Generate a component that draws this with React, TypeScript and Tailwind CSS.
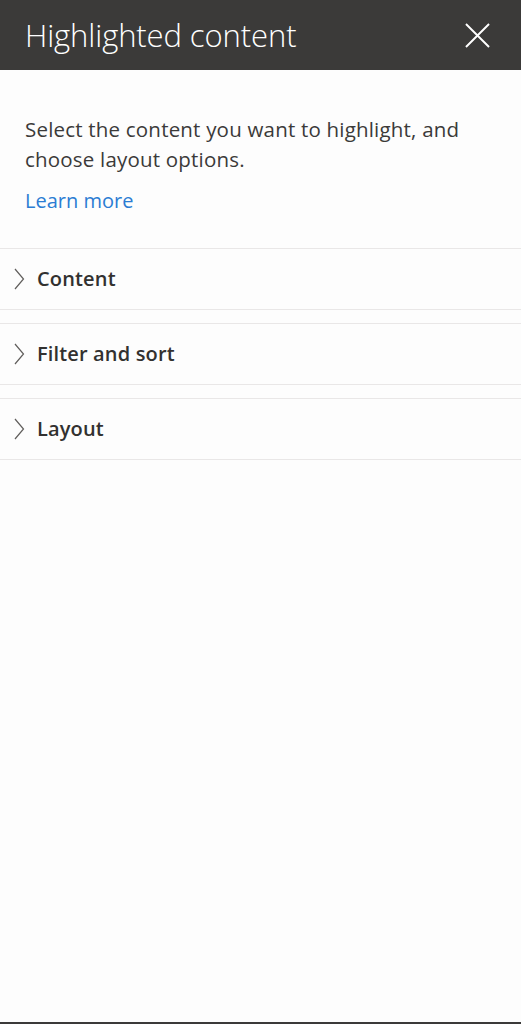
const sections = ["Content", "Filter and sort", "Layout"];

function Chevron() {
  return (
    <svg width="12" height="22" viewBox="0 0 12 22" fill="none" className="shrink-0">
      <path d="M2 1 L10.5 11 L2 21" stroke="#605e5c" strokeWidth="1.2" />
    </svg>
  );
}

export default function App() {
  return (
    <div className="w-[521px] h-[1024px] bg-[#fdfdfd] flex flex-col font-['Open_Sans','Noto_Sans',sans-serif] text-[#323130] border-b-2 border-[#3b3a39]">
      <div className="h-[70px] bg-[#3b3a39] flex items-center justify-between pl-[25px] pr-[31px] shrink-0">
        <h1 className="text-[31px] font-light text-white tracking-[-0.1px]">Highlighted content</h1>
        <svg width="25" height="25" viewBox="0 0 26 26" stroke="white" strokeWidth="2">
          <path d="M1 1 L25 25 M25 1 L1 25" />
        </svg>
      </div>

      <div className="px-[25px] pt-[44px] pb-[32px]">
        <p className="text-[20.5px] leading-[30px] tracking-[0.2px] text-[#3b3a39]">
          Select the content you want to highlight, and choose layout options.
        </p>
        <a className="block mt-[12px] text-[20px] leading-[30px] text-[#2b7cd3]">Learn more</a>
      </div>

      <div className="flex flex-col gap-[13px]">
        {sections.map((s) => (
          <div key={s} className="h-[62px] border-y border-[#e9e7e7] flex items-center gap-[12px] pl-[13px]">
            <Chevron />
            <span className="text-[20px] font-semibold tracking-[0.15px] text-[#323130]">{s}</span>
          </div>
        ))}
      </div>
    </div>
  );
}
